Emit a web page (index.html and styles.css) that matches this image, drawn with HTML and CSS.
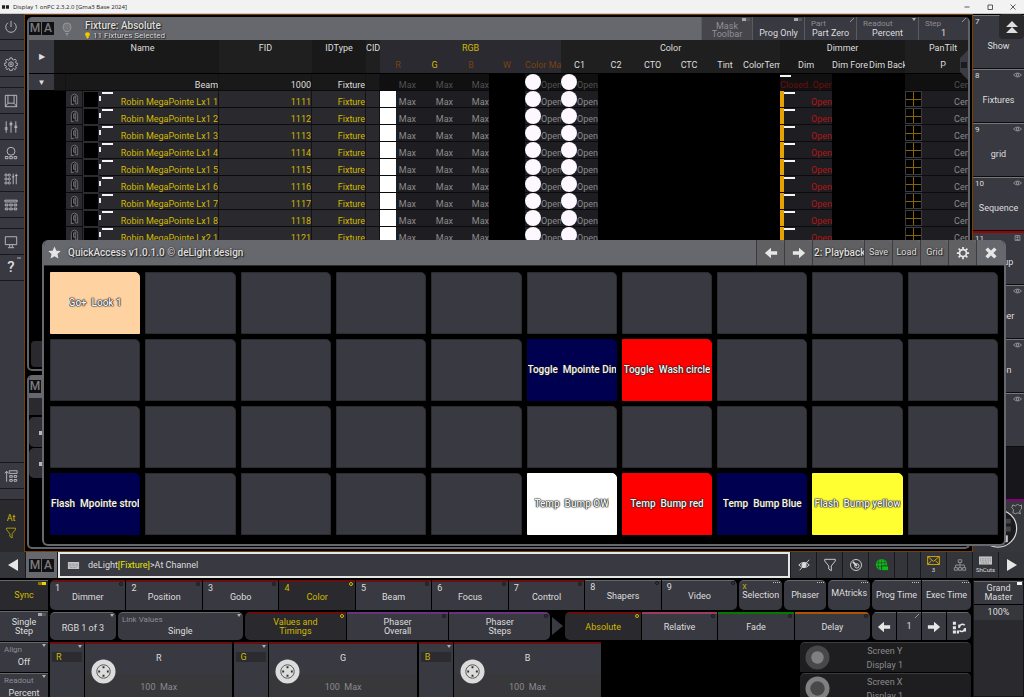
FILE: index.html
```
<!DOCTYPE html>
<html lang="en">
<head>
    <meta charset="UTF-8">
    <meta name="viewport" content="width=device-width, initial-scale=1.0">
    <title>Display 1 onPC 2.3.2.0 [Gma3 Base 2024]</title>
    <link rel="stylesheet" href="styles.css">
</head>
<body>
    <!-- Shared icons -->
    <svg class="sprite" aria-hidden="true">
        <symbol id="i-power" viewBox="0 0 16 16"><path d="M4.500 3.200a6 6 0 1 0 7 0M8 1v7" /></symbol>
        <symbol id="i-gear" viewBox="0 0 16 16"><path d="M6.800 1h2.400l.4 1.900 1.300.6 1.700-1 1.600 1.600-1 1.700.6 1.200 1.900.4v1.900l-1.900.5-.6 1.200 1 1.700-1.600 1.600-1.700-1-1.300.5-.4 1.900H6.800l-.4-1.900-1.300-.5-1.700 1-1.600-1.600 1-1.700-.6-1.200-1.900-.5V7.400l1.900-.4.6-1.200-1-1.700L3.400 2.500l1.700 1 1.300-.6z" /><circle cx="8" cy="8.300" r="2.700" /><circle cx="8" cy="8.300" r=".8" /></symbol>
        <symbol id="i-window" viewBox="0 0 16 16"><path d="M1.500 1.500h13v13h-13zM4.500 1.500v9h7v-9M4.500 10.500l-3 4M11.500 10.500l3 4" /></symbol>
        <symbol id="i-sliders" viewBox="0 0 16 16"><path d="M2.500 1.500v13M8 1.500v13M13.500 1.500v13M.8 10.500h3.400M6.300 5.500h3.400M11.800 8.500h3.400M.8 9h3.400M6.300 4h3.400M11.800 7h3.400" /></symbol>
        <symbol id="i-knob" viewBox="0 0 16 16"><circle cx="8" cy="6" r="4.500" /><path d="M1.500 12h3v2.500h-3zM6.500 12h3v2.500h-3zM11.500 12h3v2.500h-3z" /></symbol>
        <symbol id="i-faders" viewBox="0 0 16 16"><circle cx="2.300" cy="3.500" r="1.300" /><circle cx="2.300" cy="8" r="1.300" /><circle cx="2.300" cy="12.500" r="1.300" /><circle cx="6" cy="3.500" r="1.300" /><circle cx="6" cy="8" r="1.300" /><circle cx="6" cy="12.500" r="1.300" /><path d="M10.500 2v12M14 2v12M9 5.500h2.800M12.700 4h2.800" /></symbol>
        <symbol id="i-keys" viewBox="0 0 16 16"><path d="M1 2.500h14v2H1zM1.500 7h3v2h-3zM6.500 7h3v2h-3zM11.500 7h3v2h-3zM1.500 11.500h3v2h-3zM6.500 11.500h3v2h-3zM11.500 11.500h3v2h-3z" /></symbol>
        <symbol id="i-monitor" viewBox="0 0 16 16"><path d="M1.500 2h13v9h-13zM6.500 11v3M9.500 11v3M4.500 14.500h7" /></symbol>
        <symbol id="i-stack" viewBox="0 0 16 16"><path d="M3 14.500V3M1 5l2-2.500L5 5M6 2h9v3H6zM6.500 7.500h3v2h-3zM11.500 7.500h3v2h-3zM6.500 12h3v2h-3zM11.500 12h3v2h-3z" /></symbol>
        <symbol id="i-filter" viewBox="0 0 16 16"><path d="M2 1.500h12v2L9.500 9v5.500l-3-2V9L2 3.500z" /></symbol>
        <symbol id="i-eye" viewBox="0 0 16 10"><path d="M1 5q7-7 14 0q-7 7-14 0z" /><circle cx="8" cy="5" r="2.300" /></symbol>
        <symbol id="i-left" viewBox="0 0 16 16"><path d="M1 8l7-6v4h7v4H8v4z" /></symbol>
        <symbol id="i-right" viewBox="0 0 16 16"><path d="M15 8L8 2v4H1v4h7v4z" /></symbol>
        <symbol id="i-keyboard" viewBox="0 0 16 10"><path d="M0 0h16v10H0z" /><path class="cut" d="M1.500 3h13M1.500 5.500h13M3 8h10" /></symbol>
        <symbol id="i-yoke" viewBox="0 0 10 14"><path d="M1.500 12V5q0-4 3.500-4t3.500 4v7h-2V9" fill="#0d0d0f" /><path d="M4 4h2.500v5H4z" fill="#3a3a3e" /><path d="M5 2l2 2M1 12.500h3" /></symbol>
        <symbol id="i-encoder" viewBox="0 0 26 26"><circle cx="13" cy="13" r="12.500" fill="#dcdcdc" /><circle cx="13" cy="13" r="7" fill="none" stroke="#555" /><path d="M12 7.500h2v2h-2zM12 16.500h2v2h-2zM7.500 12h2v2h-2zM16.500 12h2v2h-2z" fill="#333" /></symbol>
    </svg>

    <header class="titlebar">
        <svg class="app-icon" viewBox="0 0 8 4"><path d="M0 0h3.500v4H0zM4.500 0H8v4H4.500z" fill="#222" /></svg>
        <span class="title">Display 1 onPC 2.3.2.0 [Gma3 Base 2024]</span>
        <button aria-label="Minimize"><svg viewBox="0 0 8 8"><path d="M1.500 4h5" /></svg></button>
        <button aria-label="Maximize"><svg viewBox="0 0 8 8"><path d="M2 2h4.500v4.500H2z" /></svg></button>
        <button aria-label="Close"><svg viewBox="0 0 8 8"><path d="M1.500 1.500l5 5M6.500 1.500l-5 5" /></svg></button>
    </header>

    <main class="desk">
        <nav class="rail">
            <button aria-label="Power"><svg><use href="#i-power" /></svg></button>
            <span class="spacer"></span>
            <button aria-label="Settings"><svg><use href="#i-gear" /></svg></button>
            <span class="spacer"></span>
            <button aria-label="Views"><svg><use href="#i-window" /></svg></button>
            <button aria-label="Faders"><svg><use href="#i-sliders" /></svg></button>
            <button aria-label="Encoders"><svg><use href="#i-knob" /></svg></button>
            <button aria-label="Playbacks"><svg><use href="#i-faders" /></svg></button>
            <button aria-label="Keys"><svg><use href="#i-keys" /></svg></button>
            <span class="spacer"></span>
            <button aria-label="Monitor"><svg><use href="#i-monitor" /></svg></button>
            <button class="help">?</button>
            <span class="filler"></span>
            <button aria-label="Sequence stack"><svg><use href="#i-stack" /></svg></button>
            <span class="spacer"></span>
            <button class="at-filter">At<svg><use href="#i-filter" /></svg></button>
        </nav>

        <section class="workspace">
            <div class="panel sheet-panel">
                <div class="panel-head">
                    <span class="logo"><b>M</b><b>A</b></span>
                    <svg class="bulb" viewBox="0 0 10 14"><path d="M3 9.500Q1 7.500 1 5a4 4 0 0 1 8 0q0 2.500-2 4.500zM3.500 11.500h3M4 13h2" /></svg>
                    <div class="panel-title">
                        <h1>Fixture: Absolute</h1>
                        <p><svg viewBox="0 0 6 8"><path d="M1.500 5Q0 3.800 0 2.600a3 2.600 0 0 1 6 0Q6 3.800 4.500 5v1.500L3 8 1.500 6.500z" fill="#f0c800" /></svg>11 Fixtures Selected</p>
                    </div>
                    <div class="sheet-tools">
                        <button class="toggle dim">Mask<br>Toolbar</button>
                        <button class="toggle">Prog Only</button>
                        <button class="tick"><small>Part</small>Part Zero</button>
                        <button class="drop"><small>Readout</small>Percent</button>
                        <button class="tick"><small>Step</small>1</button>
                    </div>
                </div>
                <div class="sheet-wrap">
                    <table class="sheet">
                        <colgroup id="sheet-cols"></colgroup>
                        <thead>
                            <tr>
                                <th class="expander" rowspan="2">▶</th>
                                <th></th>
                                <th colspan="3">Name</th>
                                <th class="alt">FID</th>
                                <th>IDType</th>
                                <th class="alt left">CID</th>
                                <th class="rgb on" colspan="5">RGB</th>
                                <th class="alt" colspan="6">Color</th>
                                <th colspan="3">Dimmer</th>
                                <th class="alt">PanTilt</th>
                            </tr>
                            <tr>
                                <th></th>
                                <th colspan="3"></th>
                                <th class="alt"></th>
                                <th></th>
                                <th class="alt"></th>
                                <th class="rgb off">R</th>
                                <th class="rgb on">G</th>
                                <th class="rgb off">B</th>
                                <th class="rgb off">W</th>
                                <th class="rgb off left">Color Mac</th>
                                <th class="alt">C1</th>
                                <th class="alt">C2</th>
                                <th class="alt">CTO</th>
                                <th class="alt">CTC</th>
                                <th class="alt">Tint</th>
                                <th class="alt left">ColorTemp</th>
                                <th>Dim</th>
                                <th class="left">Dim Fore</th>
                                <th class="left">Dim Back</th>
                                <th class="alt">P</th>
                            </tr>
                        </thead>
                        <tbody id="sheet-rows"></tbody>
                    </table>
                    <svg class="scroll-grip" viewBox="0 0 8 30"><path d="M8 0v30L0 22V8z" fill="#3b3b44" /><path d="M1 12h6v6H1z" fill="#1c1c20" /></svg>
                </div>
                <div class="panel-foot"></div>
            </div>
            <div class="panel back-panel">
                <div class="panel-head"><span class="logo"><b>M</b><b>A</b></span></div>
                <div class="back-strip"></div>
                <div class="back-item"></div>
                <div class="back-item"></div>
            </div>
        </section>

        <aside class="views">
            <button class="view"><i>7</i>Show</button>
            <button class="view"><i>8</i><svg><use href="#i-eye" /></svg>Fixtures</button>
            <button class="view"><i>9</i><svg><use href="#i-eye" /></svg>grid</button>
            <button class="view"><i>10</i><svg><use href="#i-eye" /></svg>Sequence</button>
            <button class="view active"><i>11</i><svg viewBox="0 0 10 10"><path d="M1 1h8v8H1zM3 7.500h4M4 3h2v2H4z" /></svg>Backup</button>
            <button class="view"><svg><use href="#i-eye" /></svg>Dimmer</button>
            <button class="view"><svg><use href="#i-eye" /></svg>Action</button>
            <button class="view" aria-label="View 14"><svg><use href="#i-eye" /></svg></button>
            <span class="view-gap"></span>
            <div class="dial">
                <svg viewBox="0 0 50 52"><circle cx="25" cy="28" r="19" fill="#1c1c20" stroke="#d8d8d8" stroke-width="1.200" /><path d="M33 18h5v5h-5zM33 26h5v5h-5z" fill="#444" stroke="none" /><path d="M32 35h3v7h-3z" fill="#ccc" stroke="none" /><path d="M40 4l3 1 2-2 2 2 2-1v4l-2 2 1 3-3-1-2 1-3-1 1-3-2-2z" fill="none" stroke="#999" /></svg>
            </div>
            <button class="collapse" aria-label="Scroll up"><svg viewBox="0 0 12 12"><path d="M0 6l6-6 6 6zM0 12l6-6 6 6z" /></svg></button>
        </aside>
    </main>

    <!-- QuickAccess pop-up -->
    <section class="quick">
        <header class="quick-head">
            <svg class="star" viewBox="0 0 14 14"><path d="M7 .5l2 4.500 4.700.5-3.500 3.200 1 4.800L7 11l-4.200 2.500 1-4.800L.3 5.500 5 5z" /></svg>
            <h2>QuickAccess v1.0.1.0 © deLight design</h2>
            <button aria-label="Previous"><svg><use href="#i-left" /></svg></button>
            <button aria-label="Next"><svg><use href="#i-right" /></svg></button>
            <button class="page">2: Playback</button>
            <button>Save</button>
            <button>Load</button>
            <button>Grid</button>
            <button aria-label="Options"><svg viewBox="0 0 16 16"><circle cx="8" cy="8" r="4" fill="none" stroke="#e6e6e6" stroke-width="2" /><path class="teeth" d="M8 1v3M8 12v3M1 8h3M12 8h3M3 3l2 2M11 11l2 2M13 3l-2 2M5 11l-2 2" /></svg></button>
            <button class="close" aria-label="Close"><svg viewBox="0 0 16 16"><path class="cross" d="M3 3l10 10M13 3L3 13" /></svg></button>
        </header>
        <div class="tiles" id="tiles"></div>
    </section>

    <div class="command">
        <button class="cmd-arrow" aria-label="Back"><svg viewBox="0 0 10 12"><path d="M10 0v12L0 6z" /></svg></button>
        <span class="cmd-logo"><span class="logo"><b>M</b><b>A</b></span></span>
        <div class="cmd-line">
            <svg class="kbd"><use href="#i-keyboard" /></svg>
            <label for="cmd">deLight<em>[Fixture]</em>&gt;</label>
            <input id="cmd" type="text" value="At Channel">
        </div>
        <button aria-label="Blind"><svg class="line" viewBox="0 0 16 16"><path d="M2 8q6-6 12 0q-6 6-12 0zM14 2L3 14" /><circle cx="8" cy="8" r="2.500" fill="#ddd" /></svg></button>
        <button aria-label="Filter"><svg class="line"><use href="#i-filter" /></svg></button>
        <button aria-label="Speed"><svg class="line" viewBox="0 0 16 16"><circle cx="8" cy="8" r="6.300" /><circle cx="9" cy="9" r="2.500" /><path d="M4.500 4.500L9 9" stroke-width="2" /></svg></button>
        <button aria-label="Network"><svg viewBox="0 0 16 16"><circle cx="7.500" cy="7.500" r="6.500" fill="#0cbc14" /><path d="M1.500 5.500h12M1.500 9.500h12M7.500 1v13M4.500 2q-2 5.500 0 11M10.500 2q2 5.500 0 11" fill="none" stroke="#303038" stroke-width=".6" /><path d="M7.500 9h8v5.500h-8z" fill="#0cbc14" stroke="#303038" /></svg></button>
        <button class="half" aria-label="Empty slot"></button>
        <button class="half" aria-label="Empty slot"></button>
        <button class="mail"><svg viewBox="0 0 14 10"><path d="M.5.5h13v9H.5zM.5.500L7 6l6.500-5.500M.5 9.500L5 5M13.500 9.500L9 5" /></svg>3</button>
        <button aria-label="Session"><svg class="line grey" viewBox="0 0 16 16"><path d="M6 2h4v3H6zM1.500 11h3.500v3H1.500zM6.300 11h3.500v3H6.300zM11 11h3.500v3H11zM8 5v6M3 11V8h10v3" /></svg></button>
        <button class="shcuts"><svg class="kbd"><use href="#i-keyboard" /></svg>ShCuts</button>
        <button class="cmd-arrow" aria-label="Forward"><svg viewBox="0 0 10 12"><path d="M0 0v12l10-6z" /></svg></button>
    </div>

    <footer class="console">
        <div class="side">
            <button class="on toggle lit">Sync</button>
            <button class="toggle">Single<br>Step</button>
            <button class="drop"><small>Align</small>Off</button>
            <button class="drop"><small>Readout</small>Percent</button>
        </div>

        <div class="encoder-bar">
            <div class="row features">
                <div class="tabs">
                    <button class="red ring"><i>1</i>Dimmer</button>
                    <button class="red ring"><i>2</i>Position</button>
                    <button class="red ring"><i>3</i>Gobo</button>
                    <button class="red ring on"><i>4</i>Color</button>
                    <button class="red ring"><i>5</i>Beam</button>
                    <button class="red ring"><i>6</i>Focus</button>
                    <button class="red ring"><i>7</i>Control</button>
                    <button class="ring"><i>8</i>Shapers</button>
                    <button class="ring"><i>9</i>Video</button>
                </div>
                <button class="dots single"><i class="mark">X</i>Selection</button>
                <button class="dots single">Phaser</button>
                <button class="dots single raised">MAtricks</button>
                <div class="times">
                    <button class="dots">Prog Time</button>
                    <button class="dots">Exec Time</button>
                </div>
            </div>

            <div class="row layers">
                <button class="drop single rgb-page">RGB 1 of 3</button>
                <button class="drop single link"><small>Link Values</small>Single</button>
                <div class="phases">
                    <button class="red ring on">Values and<br>Timings</button>
                    <button class="purple ring">Phaser<br>Overall</button>
                    <button class="purple ring">Phaser<br>Steps</button>
                </div>
                <svg class="pointer" viewBox="0 0 11 20"><path d="M0 1v18l11-9z" fill="#3a3a43" /></svg>
                <div class="modes">
                    <button class="red ring on">Absolute</button>
                    <button class="pink ring">Relative</button>
                    <button class="green ring">Fade</button>
                    <button class="orange ring">Delay</button>
                </div>
                <div class="steps">
                    <button aria-label="Previous step"><svg><use href="#i-left" /></svg></button>
                    <button class="tick">1</button>
                    <button aria-label="Next step"><svg><use href="#i-right" /></svg></button>
                    <button aria-label="Step list"><svg viewBox="0 0 16 16"><path d="M1 2h3.500v3.500H1zM1 7h3.500v3.500H1zM1 12h3.500v3.500H1zM5.500 12H8v3.500H5.500z" /><path d="M8.500 8.500a3.500 3.500 0 0 1 6-2.500M14.500 9.500a3.500 3.500 0 0 1-6 2.500M8 5v4M15.500 13V9" fill="none" stroke="#e6e6e6" stroke-width="1.800" /></svg></button>
                </div>
            </div>

            <div class="row encoders">
                <div class="encoder">
                    <button class="drop red pick"><span>R</span></button>
                    <div class="wheel red"><svg><use href="#i-encoder" /></svg><b>R</b><span>100&nbsp; Max</span></div>
                </div>
                <div class="encoder">
                    <button class="drop red pick"><span>G</span></button>
                    <div class="wheel red"><svg><use href="#i-encoder" /></svg><b>G</b><span>100&nbsp; Max</span></div>
                </div>
                <div class="encoder">
                    <button class="drop red pick"><span>B</span></button>
                    <div class="wheel red"><svg><use href="#i-encoder" /></svg><b>B</b><span>100&nbsp; Max</span></div>
                </div>
                <div class="screens">
                    <div class="screen"><svg viewBox="0 0 26 26"><circle cx="13" cy="13" r="12.500" fill="#484848" /><circle cx="13" cy="13" r="6.500" fill="#808080" /></svg><p>Screen Y<br>Display 1</p></div>
                    <div class="screen"><svg viewBox="0 0 26 26"><circle cx="13" cy="13" r="12.500" fill="#808080" /><circle cx="13" cy="13" r="7.500" fill="#484848" /></svg><p>Screen X<br>Display 1</p></div>
                </div>
            </div>
        </div>

        <div class="master">
            <button>Grand<br>Master</button>
            <output>100%</output>
        </div>
    </footer>

    <script>
        // Column widths of the fixture sheet
        const widths = [25, 12, 17, 16, 120, 93, 54, 14, 36, 37, 36, 36, 36, 37, 36, 37, 36, 36, 37, 52, 37, 36, 76];
        document.getElementById('sheet-cols').innerHTML = widths.map(w => `<col style="width:${w}px">`).join('');

        const fixtures = [
            ['Lx1 1', 1111], ['Lx1 2', 1112], ['Lx1 3', 1113], ['Lx1 4', 1114], ['Lx1 5', 1115],
            ['Lx1 6', 1116], ['Lx1 7', 1117], ['Lx1 8', 1118], ['Lx2 1', 1121]
        ];

        const wheel = '<td class="value"><div class="cell"><i class="disc"></i><span>Open</span></div></td>';

        function fixtureRow([name, fid]) {
            return `<tr class="fixture">
                <td></td><td></td>
                <td class="body icon"><svg><use href="#i-yoke" /></svg></td>
                <td class="thumb"></td>
                <td class="body"><div class="cell"><i class="chip"></i><i class="dash"></i><span>Robin MegaPointe ${name}</span></div></td>
                <td class="body">${fid}</td>
                <td class="body">Fixture</td>
                <td class="body"></td>
                <td class="value"><div class="cell"><i class="white"></i><span>Max</span></div></td>
                <td class="value">Max</td><td class="value">Max</td><td></td>
                ${wheel}${wheel}
                <td></td><td></td><td></td><td></td><td></td>
                <td class="value closed"><div class="cell"><i class="level"></i><i class="dash"></i><span>Open</span></div></td>
                <td></td><td></td>
                <td class="value"><div class="cell"><i class="position"></i><span class="center">Center</span></div></td>
            </tr>`;
        }

        const beamRow = `<tr class="beam">
            <td class="expander">▼</td><td class="body"></td>
            <td class="body" colspan="3">Beam</td>
            <td class="body">1000</td><td class="body">Fixture</td><td class="body"></td>
            <td class="value">Max</td><td class="value">Max</td><td class="value">Max</td><td></td>
            ${wheel}${wheel}
            <td></td><td></td><td></td><td></td><td></td>
            <td class="value closed"><div class="cell stacked"><i class="dash"></i><span>Closed..Open</span></div></td>
            <td></td><td></td>
            <td class="value"><div class="cell"><i></i><span class="center">Center</span></div></td>
        </tr>`;

        document.getElementById('sheet-rows').innerHTML = beamRow + fixtures.map(fixtureRow).join('');

        // QuickAccess tiles by slot, everything else stays empty
        const actions = {
            0: ['peach', 'Go+  Look 1'],
            15: ['navy', 'Toggle  Mpointe Dimmer'],
            16: ['red', 'Toggle  Wash circle'],
            30: ['navy', 'Flash  Mpointe strobe'],
            35: ['white', 'Temp  Bump OW'],
            36: ['red', 'Temp  Bump red'],
            37: ['navy', 'Temp  Bump Blue'],
            38: ['yellow', 'Flash  Bump yellow']
        };

        let tiles = '';
        for (let i = 0; i < 40; i++) {
            const [color, text] = actions[i] || ['', ''];
            tiles += `<button class="tile ${color}"><span>${text}</span></button>`;
        }
        document.getElementById('tiles').innerHTML = tiles;
    </script>
</body>
</html>
```
FILE: styles.css
```
*, *::after {
    box-sizing: border-box;
}
html, body {
    height: 100%;
}
body {
    margin: 0;
    display: flex;
    flex-direction: column;
    position: relative;
    overflow: hidden;
    background: #000;
    color: #dedede;
    font-family: Roboto, "Open Sans", sans-serif;
    font-size: 10px;
    line-height: 9px;
}
button {
    position: relative;
    margin: 0;
    padding: 0;
    border: 0;
    min-width: 0;
    background: #393941;
    color: inherit;
    font: inherit;
    overflow: hidden;
    white-space: nowrap;
}
h1, h2, p {
    margin: 0;
}
i, em {
    font-style: normal;
}
svg {
    display: block;
    flex: none;
}
.sprite {
    position: absolute;
    width: 0;
    height: 0;
}
.on {
    color: #d2b900;
}

/* Title bar */
.titlebar {
    display: flex;
    align-items: center;
    flex: none;
    height: 14px;
    padding-left: 2px;
    background: #f2f2f2;
    border-bottom: 1px solid #c8c8c8;
    color: #222;
    font: 6px "Open Sans", sans-serif;
}
.app-icon {
    width: 7px;
    height: 4px;
    margin-right: 4px;
}
.title {
    flex: 1;
}
.titlebar button {
    width: 23px;
    background: none;
}
.titlebar svg {
    width: 8px;
    height: 8px;
}
.titlebar .app-icon {
    width: 7px;
    height: 4px;
}
.titlebar button svg {
    margin: 0 auto;
}
.titlebar button path {
    fill: none;
    stroke: #333;
    stroke-width: .8;
}

/* Desk: rail, workspace, views */
.desk {
    display: flex;
    flex: 1;
    min-height: 0;
}
.rail {
    display: flex;
    flex-direction: column;
    gap: 1px;
    width: 24px;
    flex: none;
    background: #19191d;
}
.rail button {
    height: 25px;
    padding-right: 2px;
}
.rail svg {
    width: 14px;
    height: 14px;
    margin: 0 auto;
}
.rail svg, .views svg {
    fill: none;
    stroke: #c4c4c8;
}
.spacer {
    height: 10px;
    background: #393941;
}
.filler {
    flex: 1;
    background: #393941;
}
.rail .help {
    font-size: 15px;
    font-weight: 500;
}
.help::after {
    content: "";
    position: absolute;
    top: 2px;
    right: 3px;
    width: 4px;
    height: 2px;
    background: #77777c;
}
.rail .at-filter {
    height: 52px;
    background: #29292e;
    color: #d2b900;
    font-size: 9px;
}
.at-filter svg {
    width: 12px;
    height: 12px;
    margin-top: 4px;
    stroke: #d2b900;
}
.workspace {
    display: flex;
    flex-direction: column;
    gap: 4px;
    flex: 1;
    min-width: 0;
    padding: 2px;
    border: 1px solid #7a4000;
}
.panel {
    display: flex;
    flex-direction: column;
    flex: 1;
    min-height: 0;
    border: 2px solid #626368;
    border-top: 0;
    border-radius: 5px;
    overflow: hidden;
}
.back-panel {
    flex: 0 0 174px;
}
.panel-head {
    display: flex;
    align-items: center;
    flex: none;
    height: 23px;
    background: #67686d;
}
.logo {
    display: flex;
    gap: 1px;
    color: #7c7c80;
    font-size: 12px;
    line-height: 13px;
}
.logo b {
    width: 12px;
    background: #101012;
    font-weight: 500;
    text-align: center;
}
.bulb {
    width: 10px;
    height: 14px;
    margin: 0 13px 0 8px;
    fill: #77787c;
    stroke: #96969a;
}
.panel-title {
    flex: 1;
    padding-top: 2px;
    text-shadow: 0 0 2px #222, 1px 1px 1px #222;
}
.panel-title h1 {
    font-size: 10px;
    font-weight: 500;
    line-height: 11px;
}
.panel-title p {
    display: flex;
    gap: 3px;
    align-items: center;
    font-size: 8px;
}
.panel-title p svg {
    width: 5px;
    height: 7px;
}
.sheet-tools {
    display: grid;
    grid-template-columns: 51px 52px 52px 62px 50px;
    align-self: stretch;
}
.sheet-tools button {
    border-left: 1px solid #5a5a60;
    padding-top: 8px;
    font-size: 9px;
    line-height: 8px;
}
.sheet-tools .dim {
    padding-top: 2px;
    background: #45454b;
    color: #919195;
}
small {
    position: absolute;
    top: 3px;
    left: 6px;
    color: #8d8d91;
    font-size: 8px;
}

/* Corner marks of the buttons */
.toggle::after, .tick::after, .drop::after, .ring::after, .dots::after {
    content: "";
    position: absolute;
    top: 1px;
    right: 2px;
}
.toggle::after {
    width: 8px;
    height: 3px;
    background: linear-gradient(90deg, #a8a8a8 50%, #55555a 50%);
}
.lit::after {
    background: linear-gradient(90deg, #8b7900 50%, #f0d000 50%);
}
.drop::after {
    border: 2px solid transparent;
    border-top: 3px solid #b0b0b0;
}
.tick::after {
    width: 4px;
    height: 4px;
    background: linear-gradient(135deg, transparent 40%, #999 40%, #999 60%, transparent 60%);
}
.ring::after {
    top: 0;
    width: 4px;
    height: 4px;
    border: 1px solid #18181b;
    border-radius: 50%;
}
.ring.on::after {
    border-color: #d2b900;
}
.dots::after {
    width: 7px;
    border-top: 1px dotted #c0c0c0;
}

/* Fixture sheet */
.sheet-wrap {
    position: relative;
    flex: 1;
    min-height: 0;
    overflow: hidden;
    background: #000;
}
.sheet {
    width: 952px;
    table-layout: fixed;
    border-collapse: separate;
    border-spacing: 0;
    font-size: 9px;
    line-height: 9px;
}
.sheet th, .sheet td {
    height: 17px;
    padding: 0;
    overflow: hidden;
    white-space: nowrap;
}
.sheet th {
    background: #191919;
    font-weight: 400;
}
.sheet th.alt {
    background: #1f1f1f;
}
.sheet th.rgb {
    background: #2b2a31;
}
.sheet .off {
    color: #7a4210;
}
.sheet .left {
    text-align: left;
}
.sheet th.expander, .sheet td.expander {
    background: #393941;
    border-bottom: 1px solid #000;
    text-align: center;
    vertical-align: middle;
    font-size: 8px;
}
.sheet tr:nth-child(2) th {
    border-bottom: 1px solid #000;
}
.sheet td {
    text-align: right;
    vertical-align: bottom;
}
.sheet .body {
    border-bottom: 1px solid #0b0b0c;
    border-right: 1px solid #131316;
    background: #29292e;
    color: #d2b900;
}
.beam .body {
    background: #191919;
    color: #dedede;
}
.sheet .value {
    border-bottom: 1px solid #0b0b0c;
    background: #1e1e22;
    color: #8a8a8c;
}
.beam .value {
    background: #101011;
    color: #505052;
}
.sheet .closed {
    color: #b01414;
}
.sheet .beam .closed {
    color: #6e0e0e;
}
.icon svg {
    width: 9px;
    height: 13px;
    margin: 0 auto 1px;
    fill: none;
    stroke: #77777a;
}
.sheet .thumb {
    border: 1px solid #2c2c30;
}
.cell {
    display: flex;
    height: 16px;
    overflow: hidden;
}
.cell span {
    flex: 1;
    padding-top: 7px;
}
.cell.stacked {
    flex-direction: column;
}
.cell.stacked span {
    padding-top: 4px;
}
.chip {
    width: 2px;
    height: 5px;
    margin: 5px 1px 0 0;
    background: #e8e8e8;
}
.dash {
    flex: none;
    width: 11px;
    height: 2px;
    margin-top: 1px;
    background: #f4f4f4;
}
.white {
    width: 16px;
    background: #fff;
}
.disc {
    flex: none;
    width: 16px;
    height: 16px;
    border-radius: 50%;
    background: #fdf7ff;
}
.level {
    width: 4px;
    background: #e5a200;
}
.position {
    width: 17px;
    border: 1px solid #3c3c3e;
    background: linear-gradient(#8a6400, #8a6400) 7px 0 / 1px 100% no-repeat, linear-gradient(#8a6400, #8a6400) 0 7px / 100% 1px no-repeat, #000;
}
.cell .center {
    flex: none;
    margin-left: 32px;
}
.beam .cell .center {
    margin-left: 49px;
}
.scroll-grip {
    position: absolute;
    top: 10px;
    right: 0;
    width: 8px;
    height: 30px;
}
.panel-foot {
    height: 30px;
    border: 2px solid #000;
    border-radius: 6px;
    background: #29292e;
}
.back-strip {
    height: 18px;
    border-bottom: 1px solid #000;
    background: #29292e;
}
.back-item {
    height: 30px;
    margin-top: 1px;
    border-radius: 5px;
    background: linear-gradient(#b8b8b8, #b8b8b8) 10px 14px / 3px 4px no-repeat, #303036;
}

/* View buttons */
.views {
    position: relative;
    display: flex;
    flex-direction: column;
    width: 51px;
    flex: none;
    padding-top: 1px;
}
.view {
    height: 54px;
    padding-top: 8px;
    border-top: 1px solid #76767b;
    border-bottom: 1px solid #0c0c0e;
    font-size: 9px;
}
.view.active {
    border-top: 2px solid #a00000;
}
.view i {
    position: absolute;
    top: 1px;
    left: 2px;
    font-size: 8px;
}
.views .view svg {
    position: absolute;
    top: 2px;
    right: 2px;
    width: 9px;
    height: 6px;
}
.view-gap {
    flex: 1;
    background: #17171b;
}
.dial {
    border-top: 2px solid #86007c;
    background: #36363d;
}
.dial svg {
    width: 50px;
    height: 51px;
}
.collapse {
    position: absolute;
    top: 0;
    right: 0;
    width: 25px;
    height: 25px;
    border-radius: 4px;
    background: #29292c;
}
.views .collapse svg {
    width: 12px;
    height: 12px;
    margin: 0 auto;
    fill: #dedede;
    stroke: none;
}

/* QuickAccess */
.quick {
    position: absolute;
    top: 240px;
    left: 42px;
    right: 18px;
    border: 2px solid #67686d;
    border-top: 0;
    border-radius: 6px;
    overflow: hidden;
    background: #000;
}
.quick-head {
    display: flex;
    height: 26px;
    align-items: center;
    background: #67686d;
    border-bottom: 1px solid #2c2c2e;
    text-shadow: 0 0 2px #222, 1px 1px 1px #222;
}
.star {
    width: 13px;
    height: 13px;
    margin: 0 7px 0 4px;
    fill: #e6e6e6;
}
.quick-head h2 {
    flex: 1;
    font-size: 10px;
    font-weight: 500;
}
.quick-head button {
    align-self: stretch;
    width: 28px;
    border-left: 1px solid #3c3c3e;
    border-radius: 0 5px 0 0;
    background: #606062;
    font-size: 9px;
    text-shadow: inherit;
}
.quick-head .page {
    width: 52px;
    padding-left: 1px;
    font-size: 10px;
    font-weight: 500;
    text-align: left;
}
.quick-head .close {
    background: #67686d;
}
.quick-head button svg, .steps svg {
    width: 14px;
    height: 14px;
    margin: 0 auto;
    fill: #e6e6e6;
}
.teeth {
    stroke: #e6e6e6;
    stroke-width: 2;
}
.cross {
    stroke: #e6e6e6;
    stroke-width: 4;
}
.tiles {
    display: grid;
    grid-template-columns: repeat(10, minmax(0, 1fr));
    grid-auto-rows: 62px;
    gap: 5px;
    padding: 6px 6px 9px;
}
.tile {
    display: flex;
    justify-content: center;
    align-items: center;
    border: 1px solid #2c2c30;
    border-radius: 0 5px 0 0;
    color: #f4f4f4;
    font-size: 10px;
    font-weight: 500;
    text-shadow: 0 0 1px #222, 0 0 1px #222, 0 0 1px #222, 0 0 2px #222;
    white-space: pre;
}
.tile span {
    min-width: 0;
    line-height: 14px;
    overflow: hidden;
}
.tile.peach {
    background: #ffd2a2;
    border-color: #ffd2a2;
}
.tile.navy {
    background: #000050;
    border-color: #000050;
}
.tile.red {
    background: #ff0000;
    border-color: #ff0000;
}
.tile.white {
    width: auto;
    background: #fff;
    border-color: #fff;
}
.tile.yellow {
    background: #ffff32;
    border-color: #ffff32;
}

/* Command line */
.command {
    display: flex;
    gap: 1px;
    flex: none;
    height: 26px;
    background: #19191d;
}
.command button {
    width: 25px;
    background: #34343b;
}
.command button svg {
    width: 14px;
    height: 14px;
    margin: 0 auto;
}
.command .cmd-arrow svg {
    width: 10px;
    height: 12px;
    fill: #e6e6e6;
}
.command .half {
    width: 12px;
}
.cmd-logo {
    display: flex;
    justify-content: center;
    align-items: center;
    width: 31px;
    background: #67686d;
}
.cmd-line {
    display: flex;
    align-items: center;
    flex: 1;
    min-width: 0;
    padding-left: 7px;
    border: 2px solid #e4e8e4;
    background: #393941;
    font-size: 9px;
}
.cmd-line label {
    margin-left: 8px;
}
.cmd-line em {
    color: #e6e600;
}
.cmd-line input {
    flex: 1;
    min-width: 0;
    padding: 0;
    border: 0;
    outline: 0;
    background: none;
    color: inherit;
    font: inherit;
}
.kbd {
    width: 13px;
    height: 7px;
    fill: #c4c4c6;
}
.command .shcuts .kbd, .command .mail svg {
    width: 13px;
    height: 9px;
}
.cut {
    stroke: #66666a;
    stroke-dasharray: 1 1;
}
.line {
    fill: none;
    stroke: #dedede;
}
.grey {
    stroke: #98989c;
}
.mail, .shcuts {
    font-size: 6px;
}
.mail svg {
    fill: none;
    stroke: #e0b400;
}

/* Encoder bar */
.console {
    display: flex;
    gap: 2px;
    flex: none;
    height: 119px;
    padding-top: 2px;
    overflow: hidden;
}
.console button {
    border-top: 1px solid #66666a;
    font-size: 9px;
}
.console small {
    top: 2px;
    left: 4px;
}
.side {
    display: grid;
    grid-auto-rows: 30px;
    gap: 1px;
    width: 48px;
}
.side .drop, .console .link {
    padding-top: 10px;
}
.console .rgb-page {
    padding-top: 4px;
}
.console button.on {
    background: #29292e;
}
.encoder-bar {
    display: flex;
    flex-direction: column;
    gap: 2px;
    flex: 1;
    min-width: 0;
}
.row {
    display: grid;
    gap: 2px;
}
.features {
    grid-template-columns: 688fr 43fr 42fr 42fr 99fr;
    grid-auto-rows: 30px;
}
.tabs, .times, .phases, .modes, .steps {
    display: grid;
    grid-auto-flow: column;
    grid-auto-columns: minmax(0, 1fr);
    gap: 1px;
    border-radius: 5px;
    overflow: hidden;
}
.single {
    border-radius: 5px;
}
.tabs button {
    padding-top: 2px;
}
.console .raised {
    padding-bottom: 4px;
}
.tabs i, .mark {
    position: absolute;
    top: 2px;
    left: 5px;
}
.mark {
    left: 3px;
    color: #d2b900;
    font-size: 7px;
}
.console .red {
    border-top: 2px solid #6a0e10;
}
.console .purple {
    border-top: 2px solid #6b3080;
}
.console .pink {
    border-top: 2px solid #a03a62;
}
.console .green {
    border-top: 2px solid #007a00;
}
.console .orange {
    border-top: 2px solid #b05400;
}
.layers {
    grid-template-columns: 66fr 125fr 306fr 11fr 305fr 99fr;
    grid-auto-rows: 28px;
}
.pointer {
    width: 100%;
    height: 20px;
    align-self: center;
}
.encoders {
    grid-template-columns: 183fr 183fr 183fr 195fr 172fr;
    grid-auto-rows: 62px;
}
.encoder {
    display: grid;
    grid-template-columns: 34px 1fr;
    gap: 1px;
}
.console .pick {
    display: flex;
    align-items: flex-start;
    padding: 8px 2px 0;
    color: #d2b900;
    text-align: left;
}
.pick span {
    flex: 1;
    padding: 0 4px;
    background: #2b2b30;
    line-height: 10px;
}
.wheel {
    position: relative;
    display: grid;
    grid-template-rows: 28px 30px;
    align-items: center;
    background: linear-gradient(#393941 50%, #38383b 50%);
    text-align: center;
    font-size: 9px;
}
.wheel svg {
    position: absolute;
    top: 15px;
    left: 6px;
    width: 25px;
    height: 25px;
}
.wheel b {
    font-weight: 400;
}
.wheel span {
    color: #8a8a8c;
}
.screens {
    grid-column: 5;
    display: grid;
    grid-auto-rows: 30px;
    gap: 1px;
}
.screen {
    display: flex;
    align-items: center;
    padding-left: 5px;
    border-top: 1px solid #3c3c3e;
    border-radius: 5px 5px 0 0;
    background: #1e1e20;
    color: #8a8a8c;
    font-size: 9px;
    line-height: 14px;
}
.screen svg {
    width: 25px;
    height: 25px;
}
.screen p {
    flex: 1;
    padding-right: 31px;
    text-align: center;
}
.master {
    position: relative;
    display: flex;
    flex-direction: column;
    width: 51px;
    background: #29292e;
    border: 1px solid #141416;
    font-size: 9px;
    text-align: center;
}
.master button {
    height: 24px;
    border-bottom: 1px solid #000;
}
.master::after {
    content: "";
    position: absolute;
    top: 1px;
    right: 1px;
    width: 5px;
    height: 3px;
    background: #f4f4f4;
}
.master output {
    background: #36363d;
    line-height: 15px;
}
```
